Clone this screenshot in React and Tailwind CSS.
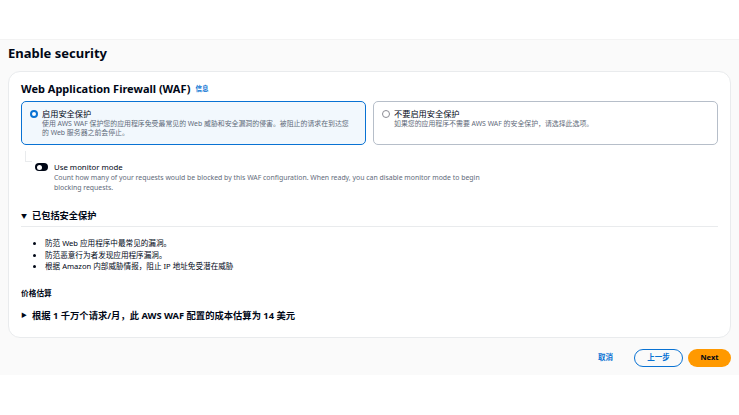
import React from "react";

const font = { fontFamily: '"Noto Sans", "Noto Sans CJK SC", sans-serif' };

export default function App() {
  return (
    <div className="w-[739px] h-[415px] bg-white text-[#000716]" style={font}>
      <div className="h-[39px] bg-white" />
      <div className="bg-[#fafafa] border-t border-[#f3f3f3] px-2 pb-2">
        <h1 className="text-[13px] font-bold leading-[18px] pt-[4px] pb-[9px]">Enable security</h1>
        <div className="bg-white border border-[#e9ebed] rounded-[12px] px-3 pt-[9px] pb-[15px]">
          <div className="flex items-center gap-[5px]">
            <span className="text-[11px] font-bold leading-[16px]">Web Application Firewall (WAF)</span>
            <span className="text-[6.5px] font-bold text-[#0972d3]">信息</span>
          </div>
          <div className="grid grid-cols-2 gap-[7px] mt-[4px]">
            <div className="border border-[#0972d3] bg-[#f2f8fd] rounded-[5px] h-[44px] pl-[8px] pt-[6px] flex gap-[4px]">
              <span className="mt-[2px] w-[8px] h-[8px] rounded-full border-[2.5px] border-[#0972d3] bg-white shrink-0" />
              <div>
                <div className="text-[8.2px] leading-[11px]">启用安全保护</div>
                <div className="text-[6.9px] leading-[9px] text-[#5f6b7a] pr-[13px]">使用 AWS WAF 保护您的应用程序免受最常见的 Web 威胁和安全漏洞的侵害。被阻止的请求在到达您的 Web 服务器之前会停止。</div>
              </div>
            </div>
            <div className="border border-[#b6bec9] rounded-[5px] h-[44px] pl-[8px] pt-[6px] flex gap-[4px]">
              <span className="mt-[2px] w-[8px] h-[8px] rounded-full border border-[#8c8c94] bg-white shrink-0" />
              <div>
                <div className="text-[8.2px] leading-[11px]">不要启用安全保护</div>
                <div className="text-[6.9px] leading-[9px] text-[#5f6b7a]">如果您的应用程序不需要 AWS WAF 的安全保护，请选择此选项。</div>
              </div>
            </div>
          </div>
          <div className="ml-[4px] mt-[6px] w-[7px] h-[11px] border-l border-b border-[#e9ebed]" />
          <div className="flex gap-[6px] ml-[14px]">
            <span className="mt-[1px] w-[13px] h-[8px] rounded-full bg-[#000716] relative shrink-0">
              <span className="absolute left-[1.5px] top-[1.5px] w-[5px] h-[5px] rounded-full bg-white" />
            </span>
            <div>
              <div className="text-[7.8px] leading-[11px]">Use monitor mode</div>
              <div className="text-[6.9px] leading-[10px] text-[#5f6b7a] w-[436px]">Count how many of your requests would be blocked by this WAF configuration. When ready, you can disable monitor mode to begin blocking requests.</div>
            </div>
          </div>
          <div className="mt-[17px] border-b border-[#e9ebed] pb-[4px] flex items-center gap-[5px]">
            <span className="text-[6px]">▼</span>
            <span className="text-[9.2px] font-bold leading-[12px]">已包括安全保护</span>
          </div>
          <ul className="mt-[11px] ml-[14px] text-[7.6px] leading-[11.6px] text-[#000716] list-disc pl-[10px]">
            <li>防范 Web 应用程序中最常见的漏洞。</li>
            <li>防范恶意行为者发现应用程序漏洞。</li>
            <li>根据 Amazon 内部威胁情报，阻止 IP 地址免受潜在威胁</li>
          </ul>
          <div className="mt-[15px] text-[7.7px] font-bold leading-[10px]">价格估算</div>
          <div className="mt-[12px] flex items-center gap-[5px]">
            <span className="text-[6px]">▶</span>
            <span className="text-[9.3px] font-bold leading-[12px]">根据 1 千万个请求/月，此 AWS WAF 配置的成本估算为 14 美元</span>
          </div>
        </div>
        <div className="flex items-center justify-end gap-[5px] mt-[11px]">
          <span className="text-[7.5px] font-bold text-[#0972d3] mr-[16px]">取消</span>
          <span className="h-[18px] w-[49px] justify-center rounded-full border border-[#0972d3] text-[#0972d3] text-[7.5px] font-bold flex items-center">上一步</span>
          <span className="h-[18px] w-[43px] justify-center rounded-full bg-[#ff9900] text-[#000716] text-[7.5px] font-bold flex items-center">Next</span>
        </div>
      </div>
    </div>
  );
}
